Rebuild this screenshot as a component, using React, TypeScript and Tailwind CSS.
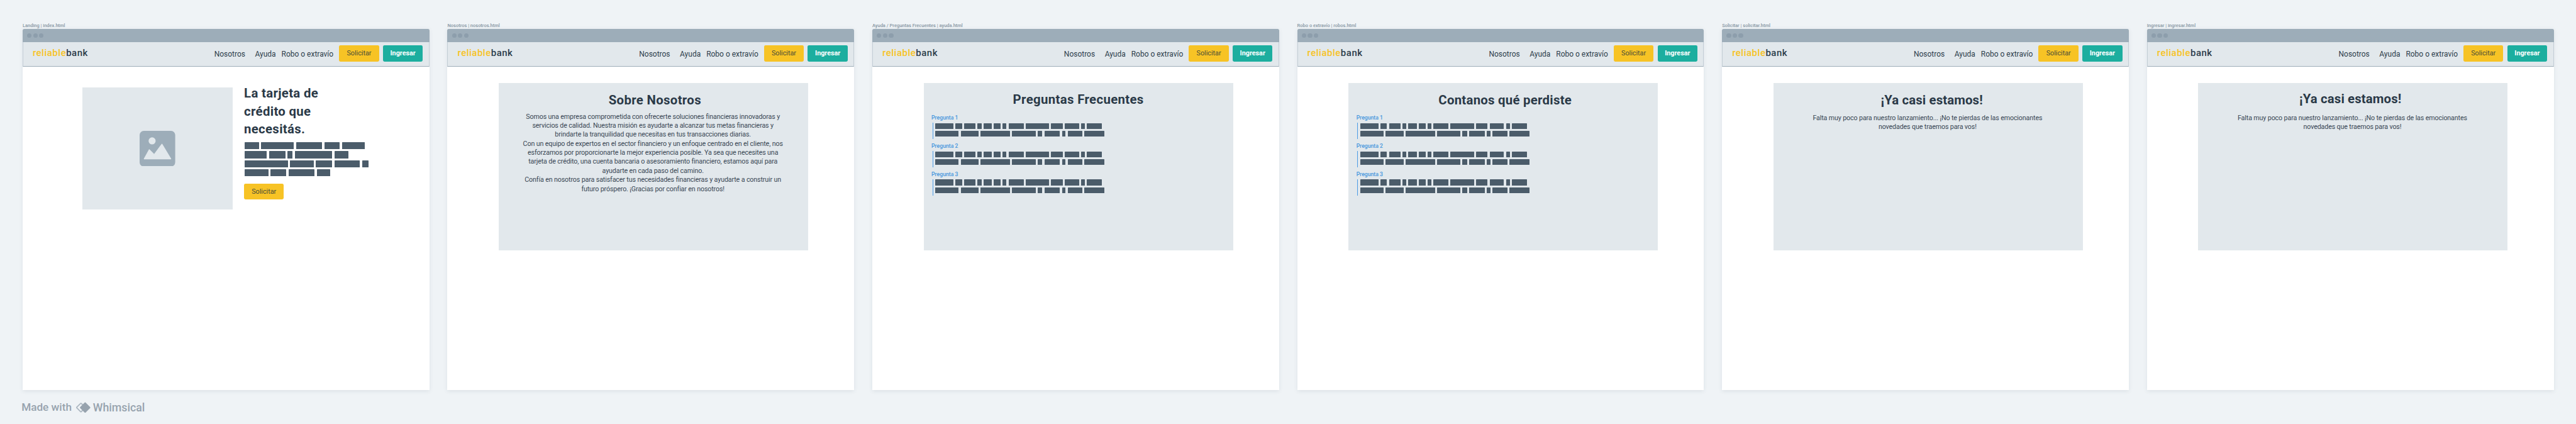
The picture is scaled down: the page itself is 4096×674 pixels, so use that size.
import type { ReactNode } from "react";

function WindowFrame({ label, children }: { label: string; children: ReactNode }) {
  return (
    <section className="flex w-1080 shrink-0 flex-col">
      <div className="h-16 whitespace-nowrap text-[7.49px] leading-16 font-medium text-[#8796a3]">{label}</div>
      <div className="h-960 rounded-t-[2.4px] bg-white shadow-[0_1.5px_6px_rgba(60,80,100,0.1)]">
        <div className="flex h-36 items-center gap-4 rounded-t-[2.4px] bg-[#9dadb9] pl-12">
          <i className="size-12 rounded-full bg-[#8d9eac]" />
          <i className="size-12 rounded-full bg-[#8d9eac]" />
          <i className="size-12 rounded-full bg-[#8d9eac]" />
        </div>
        <Header />
        {children}
      </div>
    </section>
  );
}

function Header() {
  return (
    <header className="flex h-65 items-start border-x border-b border-x-[#c3cdd5] border-b-[#9dadb9] bg-[#e2e8ec] text-[#2d3d4b]">
      <div className="mt-15.5 pl-25 text-[14.97px] leading-30 font-medium tracking-[0.52px]">
        <span className="text-[#f7c325]">reliable</span>
        <span>bank</span>
      </div>
      <nav className="mt-19.5 ml-auto flex text-[11.98px] leading-24 font-[450] whitespace-nowrap">
        <a className="w-108.25">Nosotros</a>
        <a className="w-70.25">Ayuda</a>
        <a className="w-153">Robo o extravío</a>
      </nav>
      <SolicitarButton className="mt-9" />
      <button className="mt-9 mr-15.75 ml-10.5 flex h-42 w-106 items-center justify-center rounded-[2.4px] bg-[#1cae9f] text-[10.78px] leading-20 font-bold text-white">
        Ingresar
      </button>
    </header>
  );
}

function SolicitarButton({ className }: { className: string }) {
  return (
    <button
      className={`${className} flex h-42 w-105.75 items-center justify-center rounded-[2.4px] bg-[#f7c325] text-[10.78px] leading-20 font-[450] text-[#474b39]`}
    >
      Solicitar
    </button>
  );
}

function Words({ widths, className }: { widths: string[]; className: string }) {
  return (
    <div className={`flex ${className}`}>
      {widths.map((w, i) => (
        <i key={i} className={`${w} h-full shrink-0 rounded-[0.6px] bg-[#4b5c6a]`} />
      ))}
    </div>
  );
}

const introRows = [
  ["w-38.25", "w-86", "w-70", "w-40", "w-60.5"],
  ["w-59", "w-43", "w-13", "w-100", "w-37"],
  ["w-114.5", "w-62.5", "w-44", "w-67.5", "w-17.5"],
  ["w-63", "w-42", "w-68.5", "w-36.5"],
];

const answerRows = [
  ["w-48", "w-17.5", "w-30", "w-10.5", "w-22", "w-18", "w-10", "w-40", "w-62", "w-31", "w-38", "w-10", "w-40"],
  ["w-62", "w-47.5", "w-78", "w-62", "w-12.5", "w-41.5", "w-9.5", "w-39", "w-53"],
];

function Landing() {
  return (
    <div className="flex">
      <div className="mt-55.5 ml-159.5 flex h-323 w-398 items-center justify-center bg-[#e2e8ec]">
        <svg className="size-94.5" viewBox="0 0 94 94">
          <rect width="94" height="94" rx="11" fill="#9dadb9" />
          <circle cx="33" cy="26.5" r="9.3" fill="#e2e8ec" />
          <path
            d="M12 74 L25.5 49.5 L38.5 62.5 L59 35 L82.5 74 Z"
            fill="#e2e8ec"
            stroke="#e2e8ec"
            strokeWidth="2"
            strokeLinejoin="round"
          />
        </svg>
      </div>
      <div className="mt-46.75 ml-30.5">
        <h1 className="text-[20.36px] leading-47.75 font-bold tracking-[0.32px] text-[#2a3947]">
          La tarjeta de
          <br />
          crédito que
          <br />
          necesitás.
        </h1>
        <div className="mt-10.5 flex flex-col gap-5 pl-1.5">
          {introRows.map((row, i) => (
            <Words key={i} widths={row} className="h-19 gap-6" />
          ))}
        </div>
        <SolicitarButton className="mt-19.5" />
      </div>
    </div>
  );
}

function Card({
  title,
  titleClass,
  children,
}: {
  title: string;
  titleClass: string;
  children: ReactNode;
}) {
  return (
    <article className="mt-43 ml-136.5 flex h-444 w-821 flex-col bg-[#e2e8ec]">
      <h2 className={`${titleClass} text-center text-[20.36px] leading-48 font-bold text-[#2a3947]`}>{title}</h2>
      {children}
    </article>
  );
}

function Lines({ lines }: { lines: string[] }) {
  return (
    <div className="pr-3 text-center text-[10.66px] leading-24 tracking-[-0.114px] whitespace-nowrap text-[#384653]">
      {lines.map((line) => (
        <p key={line}>{line}</p>
      ))}
    </div>
  );
}

function Questions() {
  return (
    <div className="flex flex-col pl-20.5">
      {["Pregunta 1", "Pregunta 2", "Pregunta 3"].map((q) => (
        <div key={q} className="h-74.75">
          <h3 className="text-[8.68px] leading-18 font-medium text-[#4596dd]">{q}</h3>
          <div className="mt-3 ml-2.5 flex h-44 flex-col gap-4.75 border-l border-[#4a9be6] pt-1.5 pl-6.25">
            <Words widths={answerRows[0]} className="h-15.5 gap-5.5" />
            <Words widths={answerRows[1]} className="h-15.5 gap-5.5" />
          </div>
        </div>
      ))}
    </div>
  );
}

const aboutLines = [
  "Somos una empresa comprometida con ofrecerte soluciones financieras innovadoras y",
  "servicios de calidad. Nuestra misión es ayudarte a alcanzar tus metas financieras y",
  "brindarte la tranquilidad que necesitas en tus transacciones diarias.",
  "Con un equipo de expertos en el sector financiero y un enfoque centrado en el cliente, nos",
  "esforzamos por proporcionarte la mejor experiencia posible. Ya sea que necesites una",
  "tarjeta de crédito, una cuenta bancaria o asesoramiento financiero, estamos aquí para",
  "ayudarte en cada paso del camino.",
  "Confía en nosotros para satisfacer tus necesidades financieras y ayudarte a construir un",
  "futuro próspero. ¡Gracias por confiar en nosotros!",
];

const soonLines = [
  "Falta muy poco para nuestro lanzamiento... ¡No te pierdas de las emocionantes",
  "novedades que traemos para vos!",
];

export default function App() {
  return (
    <div className="h-[674px] w-[4096px] overflow-hidden bg-[#eff3f6] pt-60 font-[Roboto,sans-serif] [--spacing:0.59892px]">
      <main className="flex gap-48 pl-60">
        <WindowFrame label="Landing | index.html">
          <Landing />
        </WindowFrame>
        <WindowFrame label="Nosotros | nosotros.html">
          <Card title="Sobre Nosotros" titleClass="h-78.25 pt-22.25 pl-7.5 tracking-[0.33px]">
            <Lines lines={aboutLines} />
          </Card>
        </WindowFrame>
        <WindowFrame label="Ayuda / Preguntas Frecuentes | ayuda.html">
          <Card title="Preguntas Frecuentes" titleClass="h-84.75 pt-20.25 tracking-[0.35px]">
            <Questions />
          </Card>
        </WindowFrame>
        <WindowFrame label="Robo o extravío | robos.html">
          <Card title="Contanos qué perdiste" titleClass="h-84.75 pt-22.25 pl-10 tracking-[0.26px]">
            <Questions />
          </Card>
        </WindowFrame>
        <WindowFrame label="Solicitar | solicitar.html">
          <Card title="¡Ya casi estamos!" titleClass="h-82.25 pt-21.5 pl-19.5 tracking-[0.12px]">
            <Lines lines={soonLines} />
          </Card>
        </WindowFrame>
        <WindowFrame label="Ingresar | ingresar.html">
          <Card title="¡Ya casi estamos!" titleClass="h-82.25 pt-18.5 pr-14 tracking-[0.12px]">
            <Lines lines={soonLines} />
          </Card>
        </WindowFrame>
      </main>
      <footer className="mt-27 flex h-36 items-center pl-57 font-medium text-[#97a3ae]">
        <span className="w-143.75 text-[17.2px] leading-36 whitespace-nowrap">Made with</span>
        <svg className="h-29.5 w-40.5" viewBox="0 0 40.5 29.5">
          <rect
            x="6.1"
            y="6.35"
            width="16.8"
            height="16.8"
            rx="1.4"
            transform="rotate(45 14.5 14.75)"
            fill="none"
            stroke="#acb7c1"
            strokeWidth="3"
          />
          <rect x="15.4" y="4.45" width="20.6" height="20.6" rx="2" transform="rotate(45 25.7 14.75)" fill="#97a3ae" />
        </svg>
        <span className="ml-5.5 text-[17.79px] leading-36 whitespace-nowrap">Whimsical</span>
      </footer>
    </div>
  );
}
